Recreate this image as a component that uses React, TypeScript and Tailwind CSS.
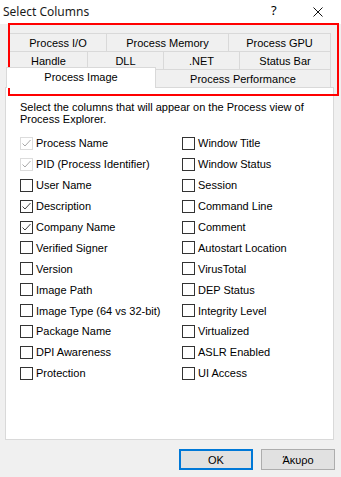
import React from 'react';

type Item = { label: string; checked?: boolean; disabled?: boolean };

const LEFT: Item[] = [
  { label: 'Process Name', checked: true, disabled: true },
  { label: 'PID (Process Identifier)', checked: true, disabled: true },
  { label: 'User Name' },
  { label: 'Description', checked: true },
  { label: 'Company Name', checked: true },
  { label: 'Verified Signer' },
  { label: 'Version' },
  { label: 'Image Path' },
  { label: 'Image Type (64 vs 32-bit)' },
  { label: 'Package Name' },
  { label: 'DPI Awareness' },
  { label: 'Protection' },
];

const RIGHT: Item[] = [
  { label: 'Window Title' },
  { label: 'Window Status' },
  { label: 'Session' },
  { label: 'Command Line' },
  { label: 'Comment' },
  { label: 'Autostart Location' },
  { label: 'VirusTotal' },
  { label: 'DEP Status' },
  { label: 'Integrity Level' },
  { label: 'Virtualized' },
  { label: 'ASLR Enabled' },
  { label: 'UI Access' },
];

function CheckBox({ checked, disabled }: { checked?: boolean; disabled?: boolean }) {
  return (
    <span
      className={`w-[13px] h-[13px] shrink-0 border bg-white flex items-center justify-center ${
        disabled ? 'border-[#dcdcdc]' : 'border-[#333333]'
      }`}
    >
      {checked && (
        <svg width="11" height="11" viewBox="0 0 11 11" fill="none">
          <path
            d="M1.5 5.5 L4 8 L9.5 2"
            stroke={disabled ? '#a8a8a8' : '#444444'}
            strokeWidth="1"
          />
        </svg>
      )}
    </span>
  );
}

function Row({ item }: { item: Item }) {
  return (
    <div className="h-[20.9px] flex items-center gap-[3px]">
      <CheckBox checked={item.checked} disabled={item.disabled} />
      <span className="whitespace-nowrap">{item.label}</span>
    </div>
  );
}

export default function App() {
  const tab = 'h-[18px] flex items-center justify-center border-t border-l border-[#d9d9d9] whitespace-nowrap';

  return (
    <div
      className="relative w-[341px] h-[477px] bg-[#f0f0f0] text-[11px] leading-[12px] text-black overflow-hidden"
      style={{ fontFamily: '"Liberation Sans", Arial, sans-serif' }}
    >
      {/* Title bar */}
      <div className="h-[24px] bg-white flex items-center pl-[3px] relative">
        <span className="text-[12px] text-[#1a1a1a]" style={{ fontFamily: '"Noto Sans", sans-serif' }}>
          Select Columns
        </span>
        <span className="absolute left-[271px] top-[4px] text-[13px]" style={{ fontFamily: '"Noto Sans", sans-serif' }}>
          ?
        </span>
        <svg className="absolute left-[313px] top-[7px]" width="10" height="10" viewBox="0 0 10 10">
          <path d="M0.5 0.5 L9.5 9.5 M9.5 0.5 L0.5 9.5" stroke="#111" strokeWidth="1" />
        </svg>
      </div>

      {/* Tabs */}
      <div className="pt-[9px]">
        <div className="flex ml-[9px]">
          <div className={`${tab} w-[97px]`}>Process I/O</div>
          <div className={`${tab} w-[122px]`}>Process Memory</div>
          <div className={`${tab} w-[103px] border-r`}>Process GPU</div>
        </div>
        <div className="flex ml-[9px]">
          <div className={`${tab} w-[78px]`}>Handle</div>
          <div className={`${tab} w-[76px]`}>DLL</div>
          <div className={`${tab} w-[76px]`}>.NET</div>
          <div className={`${tab} w-[92px] border-r`}>Status Bar</div>
        </div>
        <div className="flex items-start h-[18px] ml-[6px]">
          <div className="relative z-10 -mt-[2px] h-[21px] w-[150px] bg-white border-t border-l border-r border-[#d9d9d9] flex items-center justify-center pb-[2px]">
            Process Image
          </div>
          <div className={`${tab} w-[175px] border-l-0 border-r`}>Process Performance</div>
        </div>
      </div>

      {/* Page */}
      <div className="ml-[5px] w-[329px] h-[353px] bg-white border border-[#d9d9d9] pt-[13px] pl-[14px]">
        <p>
          Select the columns that will appear on the Process view of
          <br />
          Process Explorer.
        </p>
        <div className="mt-[8px] grid grid-cols-[162px_1fr]">
          <div>
            {LEFT.map((item) => (
              <Row key={item.label} item={item} />
            ))}
          </div>
          <div>
            {RIGHT.map((item) => (
              <Row key={item.label} item={item} />
            ))}
          </div>
        </div>
      </div>

      {/* Buttons */}
      <div className="flex justify-end gap-[8px] pr-[6px] mt-[9px]">
        <button className="w-[74px] h-[21px] bg-[#e1e1e1] border-2 border-[#0078d7] flex items-center justify-center">
          OK
        </button>
        <button className="w-[74px] h-[21px] bg-[#e1e1e1] border border-[#adadad] flex items-center justify-center">
          Άκυρο
        </button>
      </div>

      {/* Annotation */}
      <div className="absolute left-[8px] top-[23px] w-[331px] h-[73px] border-2 border-[#ff0000] pointer-events-none" />
    </div>
  );
}
